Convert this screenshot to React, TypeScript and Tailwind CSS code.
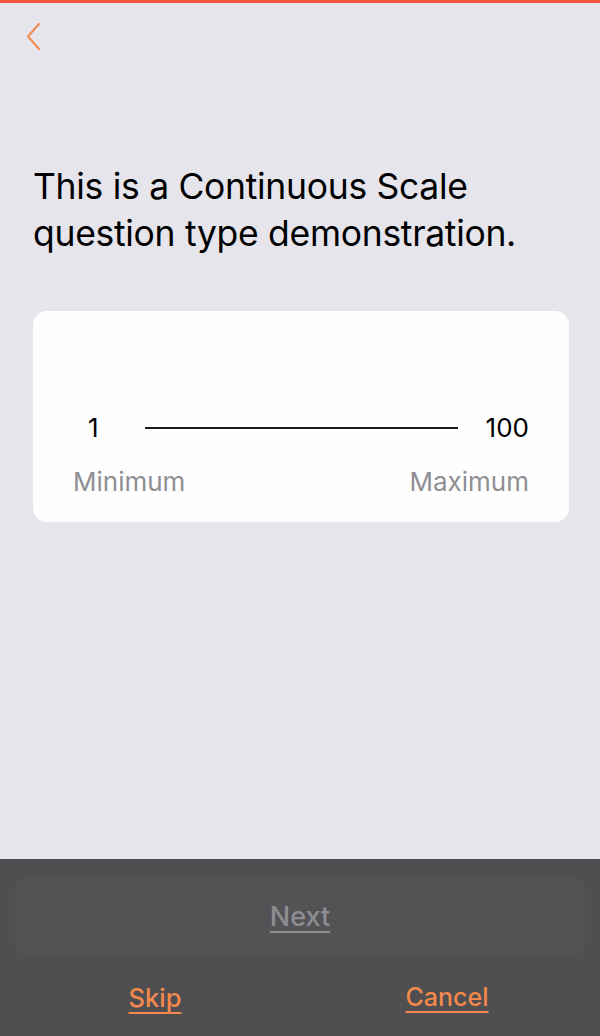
export default function App() {
  return (
    <div
      className="flex h-[1036px] w-[600px] flex-col overflow-hidden bg-[#e6e5ec]"
      style={{ fontFamily: 'Inter, "Noto Sans", sans-serif' }}
    >
      <div className="h-[3px] w-full bg-[#f4553b]" />

      <div className="flex min-h-0 flex-1 flex-col">
        <div className="px-[24px] pt-[18px]">
          <svg className="block" width="20" height="32" viewBox="0 0 20 32" fill="none">
            <path d="M15 3 L4 15.5 L15 28" stroke="#f3894c" strokeWidth="2" strokeLinecap="round" strokeLinejoin="round" />
          </svg>
        </div>

        <h1 className="mt-[110px] px-[33px] text-[35.5px] leading-[47px] font-normal tracking-[-0.3px] text-black">
          This is a Continuous Scale question type demonstration.
        </h1>

        <div className="ml-[33px] mr-[31px] mt-[54px] h-[211px] rounded-[14px] bg-[#fefeff] px-[40px] pt-[100px]">
          <div className="flex items-center">
            <span className="w-[34px] pl-[15px] text-[26px] leading-[34px] text-black">1</span>
            <div className="ml-[38px] mr-[28px] h-[1.5px] flex-1 bg-[#1c1c1e]" />
            <span className="text-[26px] leading-[34px] text-black">100</span>
          </div>
          <div className="mt-[22px] flex items-center justify-between">
            <span className="text-[26px] leading-[30px] text-[#8e8e93]">Minimum</span>
            <span className="text-[26px] leading-[30px] text-[#8e8e93]">Maximum</span>
          </div>
        </div>
      </div>

      <div className="h-[177px] bg-[#4f4e51] px-[15px] pt-[18px]">
        <div className="flex h-[80px] items-center justify-center rounded-[14px] bg-[#535255]">
          <span className="text-[27px] font-medium text-[#8e8d91] underline decoration-2 underline-offset-[5px]">
            Next
          </span>
        </div>
        <div className="mt-[22px] flex">
          <div className="flex w-[280px] justify-center">
            <span className="text-[25.5px] font-medium text-[#f3894c] underline decoration-2 underline-offset-[5px]">Skip</span>
          </div>
          <div className="flex flex-1 justify-center pl-[14px]">
            <span className="text-[25px] font-medium text-[#f3894c] underline decoration-2 underline-offset-[5px]">Cancel</span>
          </div>
        </div>
      </div>
    </div>
  )
}
